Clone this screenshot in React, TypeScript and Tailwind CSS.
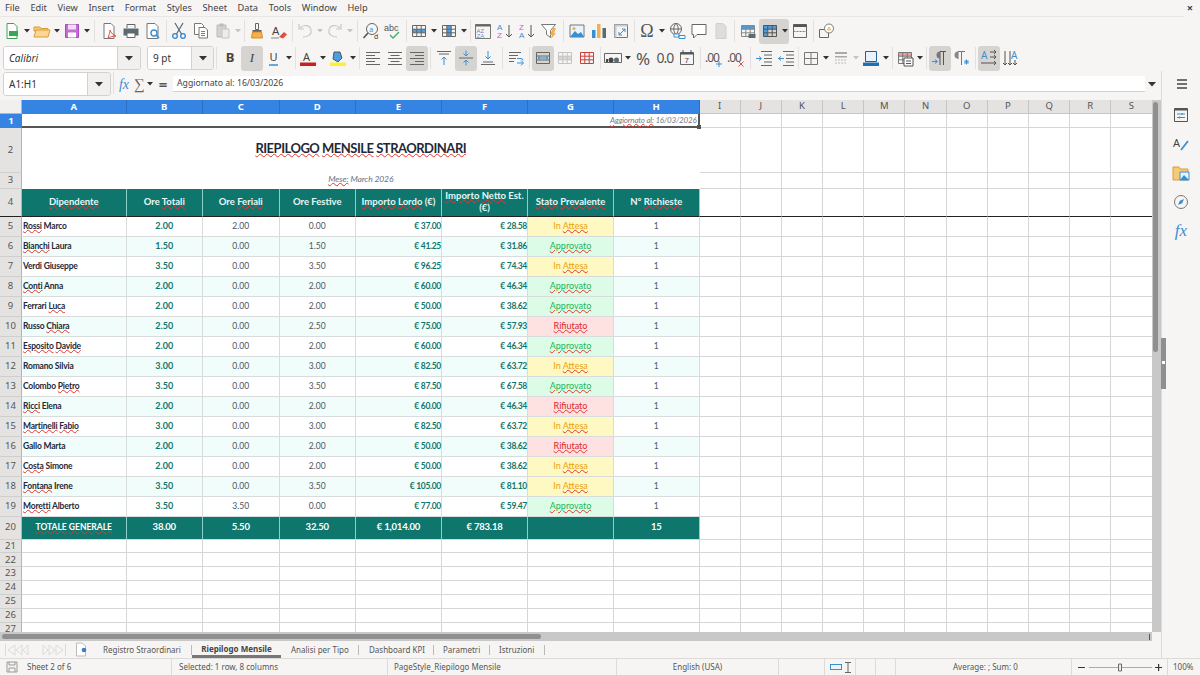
import React from "react";

const UI = "font-['Noto_Sans',sans-serif]";
const CELL = "font-['Lato',sans-serif]";

const menus = ["File", "Edit", "View", "Insert", "Format", "Styles", "Sheet", "Data", "Tools", "Window", "Help"];
const columns = ["A", "B", "C", "D", "E", "F", "G", "H"];
const idleColumns = ["I", "J", "K", "L", "M", "N", "O", "P", "Q", "R", "S"];

// a trailing * marks a word the spell checker flags
const rows = [
  ["Rossi* Marco", "2.00", "2.00", "0.00", "37.00", "28.58", "A"],
  ["Bianchi* Laura", "1.50", "0.00", "1.50", "41.25", "31.86", "O"],
  ["Verdi Giuseppe", "3.50", "0.00", "3.50", "96.25", "74.34", "A"],
  ["Conti* Anna", "2.00", "0.00", "2.00", "60.00", "46.34", "O"],
  ["Ferrari Luca*", "2.00", "0.00", "2.00", "50.00", "38.62", "O"],
  ["Russo Chiara*", "2.50", "0.00", "2.50", "75.00", "57.93", "R"],
  ["Esposito* Davide*", "2.00", "0.00", "2.00", "60.00", "46.34", "O"],
  ["Romano Silvia", "3.00", "0.00", "3.00", "82.50", "63.72", "A"],
  ["Colombo Pietro*", "3.50", "0.00", "3.50", "87.50", "67.58", "O"],
  ["Ricci* Elena", "2.00", "0.00", "2.00", "60.00", "46.34", "R"],
  ["Martinelli* Fabio*", "3.00", "0.00", "3.00", "82.50", "63.72", "A"],
  ["Gallo Marta", "2.00", "0.00", "2.00", "50.00", "38.62", "R"],
  ["Costa* Simone", "2.00", "0.00", "2.00", "50.00", "38.62", "A"],
  ["Fontana* Irene", "3.50", "0.00", "3.50", "105.00", "81.10", "A"],
  ["Moretti* Alberto", "3.50", "3.50", "0.00", "77.00", "59.47", "O"],
];

const headers = ["Dipendente*", "Ore Totali*", "Ore Feriali*", "Ore Festive", "Importo* Lordo* (€)", "Importo* Netto* Est. (€)", "Stato* Prevalente*", "N° Richieste*"];
const totals = ["38.00", "5.50", "32.50", "€ 1,014.00", "€ 783.18", "", "15"];

function Spell({ text, color = "decoration-[#e5342b]" }: { text: string; color?: string }) {
  return (
    <span>
      {text.split(" ").map((w, i) => (
        <React.Fragment key={i}>
          {i > 0 && " "}
          {w.endsWith("*") ? (
            <span className={`underline decoration-wavy decoration-1 underline-offset-0 ${color}`}>{w.slice(0, -1)}</span>
          ) : (
            w
          )}
        </React.Fragment>
      ))}
    </span>
  );
}

function Status({ kind }: { kind: string }) {
  if (kind === "A")
    return <div className="flex items-center justify-center border-r border-b border-[#d8dcdc] bg-[#fef9c3] text-[9px] text-[#eaa30c]"><Spell text="In Attesa*" /></div>;
  if (kind === "O")
    return <div className="flex items-center justify-center border-r border-b border-[#d8dcdc] bg-[#dcfce7] text-[9px] text-[#22b357]"><Spell text="Approvato*" /></div>;
  return <div className="flex items-center justify-center border-r border-b border-[#d8dcdc] bg-[#fee2e2] text-[9px] text-[#dc2626]"><Spell text="Rifiutato*" /></div>;
}

function Blank({ className = "border-b-[#d6d6d6]" }: { className?: string }) {
  return <div className={`border-r border-b border-r-[#d6d6d6] ${className}`} />;
}

function RowHead({ n, className = "border-b-[#cfcfcd]" }: { n: number; className?: string }) {
  return <div className={`flex items-center justify-center border-r border-b border-r-[#b5b5b3] bg-[#e4e3e1] text-[9.5px] text-[#555] ${UI} ${className}`}>{n}</div>;
}

function Ic({ children }: { children: React.ReactNode }) {
  return <svg width="18" height="18" viewBox="0 0 18 18" fill="none" strokeWidth="1">{children}</svg>;
}

function Tool({ active, children }: { active?: boolean; children: React.ReactNode }) {
  return <div className={`flex h-[25px] w-[22px] shrink-0 items-center justify-center rounded-[3px] ${active ? "bg-[#d6d4d1]" : ""}`}>{children}</div>;
}

function Arrow({ dim }: { dim?: boolean }) {
  return (
    <div className="flex w-[8px] shrink-0 justify-center">
      <svg width="6" height="4" viewBox="0 0 6 4"><path d="M0 0h6L3 3.5z" fill={dim ? "#c4c4c4" : "#333"} /></svg>
    </div>
  );
}

function Sep({ w = "w-[4px]" }: { w?: string }) {
  return (
    <div className={`flex shrink-0 justify-center ${w}`}>
      <div className="h-[22px] w-px bg-[#e2e1df]" />
    </div>
  );
}

function Lines({ d, color = "#666" }: { d: string; color?: string }) {
  return <path d={d} stroke={color} />;
}

function Grid3({ stroke = "#777", fill }: { stroke?: string; fill?: React.ReactNode }) {
  return (
    <>
      {fill}
      <path d="M2.5 3.5h13v11h-13zM2.5 7.2h13M2.5 10.8h13M6.8 3.5v11M11.2 3.5v11" stroke={stroke} />
    </>
  );
}

function Drop({ label, w, arrowW }: { label: string; w: string; arrowW: string }) {
  return (
    <div className="flex h-[24px] shrink-0 overflow-hidden rounded-[3px] border border-[#d3d2d0]">
      <div className={`flex items-center bg-white pl-[5px] text-[10px] text-[#333] ${w}`}>{label}</div>
      <div className={`flex items-center justify-center border-l border-[#d3d2d0] bg-[#f1f0ee] ${arrowW}`}>
        <svg width="8" height="5" viewBox="0 0 8 5"><path d="M0 0h8L4 4.5z" fill="#333" /></svg>
      </div>
    </div>
  );
}

function MainBar() {
  return (
    <div className="mr-[16px] flex h-[29px] items-center border-t border-[#e8e7e5] pl-[1px]">
      <Tool><Ic><path d="M4 1.5h7l3 3v12H4z" stroke="#3aa655" fill="#fff" /><path d="M6 9h9v5H6z" fill="#3aa655" /></Ic></Tool><Arrow />
      <Tool><Ic><path d="M1 5h6l1 1.5h7V9H1z" fill="#f6c977" stroke="#dd9c3a" /><path d="M1 15l2-7h14l-2 7z" fill="#fbd78f" stroke="#dd9c3a" /></Ic></Tool><Arrow />
      <Tool><Ic><path d="M2.5 2.5h13v13h-13z" fill="#c56fd6" stroke="#a44bb7" /><path d="M5 2.5h8v5H5z" fill="#f2def6" /><path d="M5 10.5h8v5H5z" fill="#fff" /></Ic></Tool><Arrow />
      <Sep w="w-[7px]" />
      <Tool><Ic><path d="M4 1.5h7l3 3v12H4z" stroke="#777" fill="#fff" /><path d="M8 16c1-3 2-6 2-8 1 3 3 5 6 6-3 0-6 1-8 2z" stroke="#e0503f" /></Ic></Tool>
      <Tool><Ic><path d="M5 6V2.5h8V6" stroke="#666" /><path d="M1.5 6.5h15v7h-15z" fill="#5d6a72" /><path d="M5 11h8v4.5H5z" fill="#fff" stroke="#666" /></Ic></Tool>
      <Tool><Ic><path d="M3 1.5h8l3 3v12H3z" stroke="#777" fill="#fff" /><circle cx="10" cy="11" r="3" stroke="#3a8fd1" strokeWidth="1.4" /><path d="M12 13l3 3" stroke="#3a8fd1" strokeWidth="1.6" /></Ic></Tool>
      <Sep />
      <Tool><Ic><path d="M5 1l6.5 11M13 1L6.5 12" stroke="#5b6670" strokeWidth="1.2" /><circle cx="5" cy="14" r="2.3" stroke="#2f86cc" strokeWidth="1.3" /><circle cx="13" cy="14" r="2.3" stroke="#2f86cc" strokeWidth="1.3" /></Ic></Tool>
      <Tool><Ic><path d="M2.5 1.5h7l2 2v9h-9z" stroke="#777" fill="#fff" /><path d="M7 5.5h6l2.5 2.5v8H7z" stroke="#777" fill="#fff" /><path d="M9 9.5h4M9 11.5h4M9 13.5h4" stroke="#3a8fd1" /></Ic></Tool>
      <Tool><Ic><path d="M3 3h9v12H3z" fill="#d2d2d2" stroke="#bbb" /><path d="M5.5 1.5h4v3h-4z" fill="#bbb" /><path d="M8 7h7v9H8z" fill="#ececec" stroke="#c4c4c4" /></Ic></Tool><Arrow dim />
      <Sep />
      <Tool><Ic><path d="M7.5 1.5h3v6h-3z" stroke="#666" /><path d="M4.5 8h9v2h-9z" fill="#58626a" /><path d="M4.5 10h9l1 6h-11z" fill="#f3b04d" stroke="#d98d25" /></Ic></Tool>
      <Tool><Ic><text x="2" y="12.5" fontSize="11" fill="#444" fontFamily="Liberation Sans">A</text><path d="M9 15l5-5 3 2.5-4 4z" fill="#e0503f" /><path d="M1 16h8" stroke="#888" /></Ic></Tool>
      <Sep />
      <Tool><Ic><path d="M4 6c4-4 10-3 11 2s-4 7-8 7" stroke="#c8c8c8" strokeWidth="1.2" /><path d="M3 2v5h5" stroke="#c8c8c8" strokeWidth="1.2" /></Ic></Tool><Arrow dim />
      <Tool><Ic><path d="M14 6C10 2 4 3 3 8s4 7 8 7" stroke="#c8c8c8" strokeWidth="1.2" /><path d="M15 2v5h-5" stroke="#c8c8c8" strokeWidth="1.2" /></Ic></Tool><Arrow dim />
      <Sep w="w-[6px]" />
      <Tool><Ic><circle cx="10" cy="7" r="5.5" stroke="#666" /><text x="7.3" y="9.5" fontSize="7" fill="#3a8fd1">a</text><path d="M6 11l-4.500 5" stroke="#555" strokeWidth="1.6" /><text x="12" y="17" fontSize="7" fill="#444">d</text></Ic></Tool>
      <Tool><Ic><text x="0" y="9" fontSize="9" fill="#555" fontFamily="Liberation Sans">abc</text><path d="M6 13l3 3 6-6" stroke="#3fa86a" strokeWidth="1.3" /></Ic></Tool>
      <Sep />
      <Tool><Ic><Grid3 stroke="#666" fill={<path d="M2.5 7.200h13v3.600h-13z" fill="#4a9de0" />} /></Ic></Tool><Arrow />
      <Tool><Ic><Grid3 stroke="#666" fill={<path d="M6.800 3.500h4.400v11H6.800z" fill="#4a9de0" />} /></Ic></Tool><Arrow />
      <Sep />
      <Tool><Ic><path d="M1.500 2.500h15v14h-15z" stroke="#777" /><path d="M1.500 2.500h15v2h-15z" fill="#666" /><text x="2.500" y="10.500" fontSize="6" fill="#b45ac8" fontFamily="Liberation Sans">AZ</text><text x="2.500" y="15.800" fontSize="6" fill="#4a9de0" fontFamily="Liberation Sans">ZA</text></Ic></Tool>
      <Tool><Ic><text x="1" y="8" fontSize="8" fill="#3a8fd1" fontFamily="Liberation Sans">A</text><text x="1" y="16" fontSize="8" fill="#c35fd0" fontFamily="Liberation Sans">Z</text><path d="M13 3v12M10 12l3 3 3-3" stroke="#555" /></Ic></Tool>
      <Tool><Ic><text x="1" y="8" fontSize="8" fill="#c35fd0" fontFamily="Liberation Sans">Z</text><text x="1" y="16" fontSize="8" fill="#3a8fd1" fontFamily="Liberation Sans">A</text><path d="M13 3v12M10 12l3 3 3-3" stroke="#555" /></Ic></Tool>
      <Tool><Ic><path d="M1.500 2.500h14l-5 6v7l-4-3V8.500z" stroke="#777" fill="#fff" /><path d="M13 6l-3 7 2 0-1 4 5-6h-2l2-5z" fill="#f3b04d" /></Ic></Tool>
      <Sep w="w-[6px]" />
      <Tool><Ic><path d="M2 3h14v12H2z" fill="#e8f3fb" stroke="#777" /><path d="M2 15l5-6 3 3 3-2 3 5z" fill="#3a8fd1" /><circle cx="6" cy="6.500" r="1.500" fill="#f3b04d" /></Ic></Tool>
      <Tool><Ic><path d="M2 8h3.500v8H2z" fill="#3a8fd1" /><path d="M7 2h3.500v14H7z" fill="#f3b04d" /><path d="M12.500 6H16v10h-3.500z" fill="#5d6a72" /></Ic></Tool>
      <Tool><Ic><path d="M2.500 2.500h13v13h-13z" stroke="#777" /><path d="M2.500 2.500h13v2h-13zM2.500 2.500h2v13h-2z" fill="#ccc" /><path d="M7 13l6-6M10 7h3v3M7 10v3h3" stroke="#3a8fd1" /></Ic></Tool>
      <Sep />
      <Tool><span className="font-['Liberation_Serif',serif] text-[18px] leading-none text-[#555]">Ω</span></Tool><Arrow />
      <Tool><Ic><circle cx="8" cy="7" r="5.500" stroke="#666" /><path d="M2.500 7h11M8 1.500c-3 3-3 8 0 11M8 1.500c3 3 3 8 0 11" stroke="#666" /><path d="M6 12h5v3H6zM11 13.500h6v3h-6z" stroke="#3a8fd1" fill="#fff" /></Ic></Tool>
      <Tool><Ic><path d="M2 2.500h14v10H7l-3.500 3.500v-3.500H2z" stroke="#666" fill="#fff" /></Ic></Tool>
      <Tool><Ic><path d="M4 1.500h7l3 3v12H4z" fill="#ddd" stroke="#d0d0d0" /></Ic></Tool>
      <Sep w="w-[5px]" />
      <Tool><Ic><Grid3 stroke="#888" fill={<path d="M2.500 3.500h13v3.700h-13z" fill="#4a9de0" />} /><path d="M9.500 12h7v4h-7z" fill="#5d6a72" /></Ic></Tool>
      <div className="flex h-[25px] items-center rounded-[3px] bg-[#d6d4d1]">
        <Tool><Ic><Grid3 stroke="#555" fill={<path d="M2.500 3.500h13v3.700h-13zM2.500 3.500h4.300v11H2.500z" fill="#4a9de0" />} /></Ic></Tool><Arrow />
      </div>
      <Tool><Ic><path d="M2.500 2.500h13v13h-13z" stroke="#666" /><path d="M2.500 2.500h13v2.500h-13z" fill="#555" /><path d="M2.500 9.500h13" stroke="#3a8fd1" strokeDasharray="2 1" /></Ic></Tool>
      <Sep w="w-[5px]" />
      <Tool><Ic><path d="M1.500 7.500h9v8h-9z" stroke="#666" /><circle cx="11" cy="6.500" r="4.500" stroke="#777" fill="#fff" /><path d="M9.500 8l1.500-3 1.500 3z" stroke="#f3b04d" /></Ic></Tool>
    </div>
  );
}

function FormatBar() {
  return (
    <div className="flex h-[26px] items-center pl-[3px]">
      <div className="italic"><Drop label="Calibri" w="w-[113px]" arrowW="w-[23px]" /></div>
      <div className="ml-[6px]"><Drop label="9 pt" w="w-[43px]" arrowW="w-[22px]" /></div>
      <Sep w="w-[5px]" />
      <Tool><span className="text-[13px] font-bold text-[#444]">B</span></Tool>
      <Tool active><span className="font-['Liberation_Serif',serif] text-[13px] italic text-[#444]">I</span></Tool>
      <Tool><Ic><text x="4.500" y="12" fontSize="11" fill="#444" fontFamily="Noto Sans">U</text><path d="M4 16h9" stroke="#3a8fd1" strokeWidth="1.500" /></Ic></Tool><Arrow />
      <Sep />
      <Tool><Ic><text x="4" y="12" fontSize="11" fill="#444" fontFamily="Noto Sans">A</text><path d="M1 13.500h16v3.500H1z" fill="#c9211e" /></Ic></Tool><Arrow />
      <Tool><Ic><path d="M5 3h6l2 6-4 4-5-3z" fill="#4a9de0" stroke="#555" /><path d="M1 13.500h16v3.500H1z" fill="#ffee33" /></Ic></Tool><Arrow />
      <Sep w="w-[5px]" />
      <Tool><Ic><Lines d="M2 3.500h14M2 6.500h9M2 9.500h14M2 12.500h9M2 15.500h14" /></Ic></Tool>
      <Tool><Ic><Lines d="M2 3.500h14M4.500 6.500h9M2 9.500h14M4.500 12.500h9M2 15.500h14" /></Ic></Tool>
      <Tool active><Ic><Lines d="M2 3.500h14M7 6.500h9M2 9.500h14M7 12.500h9M2 15.500h14" /></Ic></Tool>
      <Sep w="w-[5px]" />
      <Tool><Ic><Lines d="M2 2.500h14M4 5h10" /><path d="M9 16V8M6.500 10.500L9 8l2.500 2.500" stroke="#3a8fd1" /></Ic></Tool>
      <Tool active><Ic><Lines d="M2 9h14" /><path d="M9 1.500V7M6.500 4.500L9 7l2.500-2.500M9 16.500V11M6.500 13.500L9 11l2.500 2.500" stroke="#3a8fd1" /></Ic></Tool>
      <Tool><Ic><Lines d="M4 13h10M2 15.500h14" /><path d="M9 2v8M6.500 7.500L9 10l2.500-2.500" stroke="#3a8fd1" /></Ic></Tool>
      <Sep w="w-[6px]" />
      <Tool><Ic><Lines d="M2 3.500h12M2 6.500h9M2 9.500h7M2 12.500h5" /><path d="M10 14h6M14 11.500l2.500 2.500-2.500 2.500M10 9.500h4a2 2 0 0 1 2 2" stroke="#3a8fd1" /></Ic></Tool>
      <Sep w="w-[5px]" />
      <Tool active><Ic><path d="M2.500 3.500h13v11h-13zM2.500 7h13M2.500 11h13" stroke="#666" /><path d="M4 9h10M4 9l2-1.500M4 9l2 1.500M14 9l-2-1.500M14 9l-2 1.500" stroke="#3a8fd1" /></Ic></Tool>
      <Tool><Ic><Grid3 stroke="#c4c4c4" fill={<path d="M2.500 7.200h13v3.600h-13z" fill="#d6d6d6" />} /></Ic></Tool>
      <Tool><Ic><Grid3 stroke="#c9413a" /></Ic></Tool>
      <Sep />
      <Tool><Ic><path d="M0.500 4.500h17v9h-17z" stroke="#666" /><circle cx="7" cy="11" r="2.500" fill="#444" /><circle cx="12.500" cy="11" r="2.500" fill="#5d6a72" /><path d="M2 10h2v3H2z" fill="#444" /></Ic></Tool><Arrow />
      <Tool><span className="text-[17px] leading-none text-[#555]">%</span></Tool>
      <Tool><span className="text-[14px] leading-none tracking-[-1px] text-[#555]">0.0</span></Tool>
      <Tool><Ic><path d="M2.500 3.500h13v12h-13z" stroke="#666" /><path d="M2.500 3.500h13v2h-13z" fill="#555" /><path d="M5 1v3M13 1v3" stroke="#555" /><text x="6.500" y="13.500" fontSize="8" fill="#444" fontFamily="Liberation Sans">7</text></Ic></Tool>
      <Sep w="w-[5px]" />
      <Tool><Ic><text x="0" y="13" fontSize="12" letterSpacing="-1" fill="#555" fontFamily="Noto Sans">.00</text><path d="M11 15h6M14 12v6" stroke="#3a8fd1" /></Ic></Tool>
      <Tool><Ic><text x="0" y="13" fontSize="12" letterSpacing="-1" fill="#555" fontFamily="Noto Sans">.00</text><path d="M11.500 12.500l5 5M16.500 12.500l-5 5" stroke="#e0503f" /></Ic></Tool>
      <Sep w="w-[6px]" />
      <Tool><Ic><Lines d="M6 2.500h11M9 6h8M9 9.500h8M9 13h8M6 16.500h11" /><path d="M1 9.500h5M4 7.500l2.500 2-2.500 2" stroke="#3a8fd1" /></Ic></Tool>
      <Tool><Ic><Lines d="M6 2.500h11M9 6h8M9 9.500h8M9 13h8M6 16.500h11" /><path d="M7 9.500H1.500M4 7.500l-2.500 2 2.500 2" stroke="#3a8fd1" /></Ic></Tool>
      <Sep w="w-[3px]" />
      <Tool><Ic><path d="M2.500 3.500h13v12h-13zM9 3.500v12M2.500 9.500h13" stroke="#777" /></Ic></Tool><Arrow />
      <Tool><Ic><path d="M3 3h12v2H3zM3 7h12v1.500H3z" fill="#aaa" /><path d="M3 11h12M3 14h12" stroke="#bbb" strokeDasharray="2 1" /></Ic></Tool><Arrow dim />
      <Tool><Ic><path d="M3.500 2.500h11v10h-11z" stroke="#1f5f99" fill="#eaf3fa" /><path d="M1 13.500h16v3.500H1z" fill="#1f6fb2" /></Ic></Tool><Arrow />
      <Sep />
      <Tool><Ic><Grid3 stroke="#777" fill={<path d="M2.500 3.500h13v3.700h-13z" fill="#e9a29d" />} /><path d="M8 9h9v8H8z" fill="#fff" stroke="#555" /><path d="M10 12h5M10 14.500h5" stroke="#555" /></Ic></Tool><Arrow />
      <Sep w="w-[5px]" />
      <Tool active><Ic><path d="M9 16V2.500h6M12.500 2.500V16" stroke="#555" /><path d="M9 2.500a3.500 3.500 0 0 0 0 7" fill="#777" /><path d="M1 12.500h5M4 10.500l2.500 2-2.500 2" stroke="#3a8fd1" /></Ic></Tool>
      <Tool><Ic><path d="M5 10V2.500h7M8.500 2.500V16" stroke="#777" /><path d="M5 2.500a3.500 3.500 0 0 0 0 7" fill="#888" /><path d="M11 13l5 0M13.500 10.500v5M11.800 11.200l3.400 3.600M15.200 11.200l-3.400 3.600" stroke="#3a8fd1" /></Ic></Tool>
      <Sep w="w-[5px]" />
      <Tool active><Ic><text x="1" y="10" fontSize="10" fill="#3a8fd1" fontFamily="Noto Sans">A</text><path d="M10 3h6M14 1l2 2-2 2M10 8h6M14 6l2 2-2 2M1 14h15M14 12l2 2-2 2" stroke="#555" /></Ic></Tool>
      <Tool><Ic><text x="9" y="10" fontSize="10" fill="#3a8fd1" fontFamily="Noto Sans">A</text><path d="M3 2v14M1 14l2 2 2-2M8 2v14M6 14l2 2 2-2M13 11v5M11 14l2 2 2-2" stroke="#555" /></Ic></Tool>
    </div>
  );
}

function FormulaBar() {
  return (
    <div className="flex h-[29px] items-start pl-[3px] pt-[1px]">
      <Drop label="A1:H1" w="w-[83px]" arrowW="w-[23px]" />
      <Sep w="w-[5px]" />
      <div className="flex h-[24px] w-[16px] items-center justify-center font-['Liberation_Serif',serif] text-[14px] italic text-[#3a8fd1]">fx</div>
      <div className="flex h-[24px] w-[14px] items-center justify-center font-['Liberation_Serif',serif] text-[15px] text-[#666]">∑</div>
      <div className="flex h-[24px] items-center"><Arrow /></div>
      <div className="flex h-[24px] w-[18px] items-center justify-center text-[15px] font-bold text-[#555]">=</div>
      <div className="ml-[1px] mt-[4px] flex h-[16px] w-[972px] items-center border-b border-[#d3d2d0] bg-white pl-[4px] text-[8.7px] text-[#444]">Aggiornato al: 16/03/2026</div>
      <div className="flex h-[24px] w-[14px] items-center justify-center"><svg width="8" height="5" viewBox="0 0 8 5"><path d="M0 0h8L4 4.500z" fill="#333" /></svg></div>
    </div>
  );
}

function Sheet() {
  return (
    <div className={`grid h-[532px] w-[1152px] shrink-0 grid-cols-[22px_104.5px_76.5px_76.5px_76.5px_86px_86px_86px_85.5px_repeat(11,41.2px)] grid-rows-[14px_14px_45px_15.5px_28px_repeat(15,20px)_23px_repeat(7,13.85px)] overflow-hidden bg-white ${CELL}`}>
      <div className="border-r border-b border-[#b5b5b3] bg-[#f1f0ee]" />
      {columns.map((c) => (
        <div key={c} className={`flex items-center justify-center border-r border-[#2a6fc4] bg-[#3584e4] text-[9.5px] font-bold text-white ${UI}`}>{c}</div>
      ))}
      {idleColumns.map((c) => (
        <div key={c} className={`flex items-center justify-center border-r border-b border-[#c6c6c4] bg-[#e4e3e1] text-[9.5px] text-[#555] ${UI}`}>{c}</div>
      ))}

      <div className={`flex items-center justify-center bg-[#3584e4] text-[9.5px] font-bold text-white ${UI}`}>1</div>
      <div className="relative col-span-8 flex items-center justify-end border-r-2 border-b-2 border-[#555] pr-[1px] text-[8px] tracking-[-0.2px] italic text-[#777e88]">
        <Spell text="Aggiornato* al:* 16/03/2026" />
        <div className="absolute -right-[3px] -bottom-[3px] h-[4px] w-[4px] bg-[#555]" />
      </div>
      {idleColumns.map((c) => <Blank key={c} />)}

      <RowHead n={2} />
      <div className="col-span-8 flex items-center justify-center pb-[3px] text-[13px] font-bold tracking-[-0.5px] text-[#1f2937]">
        <Spell text="RIEPILOGO* MENSILE* STRAORDINARI*" />
      </div>
      {idleColumns.map((c) => <Blank key={c} />)}

      <RowHead n={3} />
      <div className="col-span-8 flex items-center justify-center pb-[2px] text-[8.5px] tracking-[-0.1px] italic text-[#6b7280]">
        <Spell text="Mese:* March 2026" />
      </div>
      {idleColumns.map((c) => <Blank key={c} />)}

      <RowHead n={4} className="border-b-[#222]" />
      {headers.map((h) => (
        <div key={h} className="flex items-center justify-center border-r border-b border-r-[#8ccfc8] border-b-[#222] bg-[#0f766e] px-[2px] text-center text-[9.5px] leading-[12px] font-bold text-[#e8f7f5]">
          <Spell text={h} />
        </div>
      ))}
      {idleColumns.map((c) => <Blank key={c} className="border-b-[#222]" />)}

      {rows.map((r, i) => {
        const bg = i % 2 === 1 ? "bg-[#f0fdfa]" : "bg-white";
        const base = `flex items-center border-r border-b border-[#d8dcdc] ${bg}`;
        return (
          <React.Fragment key={i}>
            <RowHead n={i + 5} />
            <div className={`${base} pl-[1px] text-[8.5px] tracking-[-0.2px] font-bold text-[#1f2937]`}><Spell text={r[0]} /></div>
            <div className={`${base} justify-center text-[9px] font-bold text-[#0f766e]`}>{r[1]}</div>
            <div className={`${base} justify-center text-[8.5px] text-[#4b5563]`}>{r[2]}</div>
            <div className={`${base} justify-center text-[8.5px] text-[#4b5563]`}>{r[3]}</div>
            <div className={`${base} justify-end text-[8.5px] tracking-[-0.3px] font-bold text-[#0f766e]`}>€ {r[4]}</div>
            <div className={`${base} justify-end text-[8.5px] tracking-[-0.3px] font-bold text-[#0f766e]`}>€ {r[5]}</div>
            <Status kind={r[6]} />
            <div className={`${base} justify-center text-[8.5px] text-[#4b5563]`}>1</div>
            {idleColumns.map((c) => <Blank key={c} />)}
          </React.Fragment>
        );
      })}

      <RowHead n={20} />
      <div className="flex items-center justify-center border-r border-b border-r-[#8ccfc8] border-b-[#d6d6d6] bg-[#0f766e] text-[8.5px] font-bold text-white">
        <Spell text="TOTALE* GENERALE*" />
      </div>
      {totals.map((t, i) => (
        <div key={i} className="flex items-center justify-center border-r border-b border-r-[#8ccfc8] border-b-[#d6d6d6] bg-[#0f766e] pb-[1px] text-[9.5px] tracking-[-0.2px] font-bold text-white">{t}</div>
      ))}
      {idleColumns.map((c) => <Blank key={c} />)}

      {[21, 22, 23, 24, 25, 26, 27].map((n) => (
        <React.Fragment key={n}>
          <RowHead n={n} />
          {columns.map((c) => <Blank key={c} />)}
          {idleColumns.map((c) => <Blank key={c} />)}
        </React.Fragment>
      ))}
    </div>
  );
}

function SheetTabs() {
  const tab = "flex h-[17px] items-center whitespace-nowrap text-[8px] text-[#555]";
  return (
    <div className="flex h-[17px] items-center text-[#555]">
      <div className="ml-[5px] flex w-[61px] justify-center">
        <svg width="61" height="14" viewBox="0 0 61 14" fill="none" stroke="#dcdbd9"><path d="M.5 1v12M10 2L3 7l7 5zM17 2l-6 5 6 5zM23 2l-5 5 5 5zM38 2l5 5-5 5zM44 2l6 5-6 5zM51 2l7 5-7 5zM60.500 1v12" /></svg>
      </div>
      <div className="ml-[9px] flex w-[12px] justify-center">
        <svg width="12" height="15" viewBox="0 0 12 15"><path d="M1.500 1h6l3 3v10h-9z" stroke="#bbb" fill="#fff" /><circle cx="9" cy="8" r="2.300" fill="#3a7fc4" /></svg>
      </div>
      <div className={`ml-[16px] w-[88px] ${tab}`}>Registro Straordinari</div>
      <div className="h-[10px] w-px bg-[#bbb]" />
      <div className="flex h-[17px] w-[89px] items-center justify-center whitespace-nowrap border-b-[3px] border-[#777] pt-[2px] text-[8px] font-bold text-[#444]">Riepilogo Mensile</div>
      <div className={`ml-[10px] w-[67px] ${tab}`}>Analisi per Tipo</div>
      <div className="h-[10px] w-px bg-[#bbb]" />
      <div className={`ml-[10px] w-[64px] ${tab}`}>Dashboard KPI</div>
      <div className="h-[10px] w-px bg-[#bbb]" />
      <div className={`ml-[9px] w-[46px] ${tab}`}>Parametri</div>
      <div className="h-[10px] w-px bg-[#bbb]" />
      <div className={`ml-[9px] w-[45px] ${tab}`}>Istruzioni</div>
      <div className="h-[10px] w-px bg-[#bbb]" />
    </div>
  );
}

function Sidebar() {
  return (
    <div className="relative flex w-[39px] shrink-0 flex-col items-center border-l border-[#dcdbd9] pt-[4px]">
      <div className="absolute top-[267px] -left-px h-[51px] w-[5px] bg-[#8f8f8f]">
        <div className="absolute top-[23px] left-[1px] h-[3px] w-[3px] bg-white" />
      </div>
      <div className="ml-[1px] flex h-[18px] items-center">
        <svg width="12" height="10" viewBox="0 0 12 10"><path d="M1 1h10M1 5h10M1 9h10" stroke="#444" strokeWidth="1.300" /></svg>
      </div>
      <div className="mt-[13px] flex flex-col items-center gap-[11px]">
        <Ic><path d="M2.500 2.500h13v13h-13z" stroke="#555" /><path d="M2.500 2.500h13v2h-13z" fill="#555" /><path d="M5 8h8M5 11.500h8" stroke="#3a8fd1" /><path d="M10 7v2M7.500 10.500v2" stroke="#3a8fd1" /></Ic>
        <Ic><text x="1" y="12" fontSize="11" fill="#444" fontFamily="Noto Sans">A</text><path d="M9 15l7-9" stroke="#3a8fd1" strokeWidth="1.800" /></Ic>
        <Ic><path d="M1 3h6l1 2h8v11H1z" fill="#f6c977" stroke="#dd9c3a" /><path d="M8 8h9v8H8z" fill="#e8f3fb" stroke="#3a8fd1" /><path d="M8 16l4-5 5 5z" fill="#3a8fd1" /></Ic>
        <Ic><circle cx="9" cy="9" r="6.500" stroke="#777" /><path d="M6 12l1.800-4.200L12 6l-1.800 4.200z" fill="#3a8fd1" /></Ic>
        <div className="font-['Liberation_Serif',serif] text-[17px] leading-none italic text-[#3a8fd1]">fx</div>
      </div>
    </div>
  );
}

function StatusBar() {
  const sec = "flex h-full shrink-0 items-center border-l border-[#dcdbd9]";
  return (
    <div className={`flex h-[17px] items-center border-t border-[#dcdbd9] text-[8px] text-[#555] ${UI}`}>
      <div className="flex h-full w-[171px] shrink-0 items-center pl-[6px]">
        <svg width="12" height="12" viewBox="0 0 12 12"><path d="M1 1h10v10H1zM3 1v3h6V1M3 11V7h6v4" stroke="#999" fill="none" /></svg>
        <span className="ml-[9px]">Sheet 2 of 6</span>
      </div>
      <div className={`${sec} w-[216px] pl-[7px]`}>Selected: 1 row, 8 columns</div>
      <div className={`${sec} w-[229px] pl-[6px]`}>PageStyle_Riepilogo Mensile</div>
      <div className={`${sec} w-[162px] justify-center`}>English (USA)</div>
      <div className={`${sec} w-[46px]`} />
      <div className={`${sec} w-[31px] justify-center gap-[3px]`}>
        <div className="h-[6px] w-[12px] border border-[#3a8fd1] bg-[#e8f3fb]" />
        <svg width="6" height="11" viewBox="0 0 6 11"><path d="M0 .500h6M0 10.500h6M3 .500v10" stroke="#666" /></svg>
      </div>
      <div className={`${sec} w-[20px]`} />
      <div className={`${sec} w-[20px]`} />
      <div className={`${sec} w-[176px] pl-[57px]`}>Average: ; Sum: 0</div>
      <div className={`${sec} w-[96px] pl-[6px]`}>
        <svg width="90" height="11" viewBox="0 0 90 11"><path d="M0 5.500h7M78 5.500h7M81.500 2v7" stroke="#333" strokeWidth="1.200" /><path d="M11 5.500h64" stroke="#aaa" /><path d="M41 2h3v7h-3z" fill="#eee" stroke="#666" /></svg>
      </div>
      <div className="flex h-full flex-1 items-center border-l border-[#dcdbd9] pl-[5px]">100%</div>
    </div>
  );
}

export default function App() {
  return (
    <div className={`flex h-[675px] w-[1200px] flex-col overflow-hidden bg-[#f6f5f4] ${UI}`}>
      <div className="flex h-[16px] items-center gap-[10.6px] pl-[5px] text-[9.25px] text-[#444]">
        {menus.map((m) => <span key={m}>{m}</span>)}
        <span className="ml-auto mr-[7px] text-[11px] font-bold">×</span>
      </div>
      <MainBar />
      <FormatBar />
      <div className="flex h-[587px]">
        <div className="flex w-[1161px] shrink-0 flex-col">
          <FormulaBar />
          <div className="flex h-[532px]">
            <Sheet />
            <div className="h-full w-[9px] shrink-0 bg-[#c8c8c8] pt-[2px]">
              <div className="h-[250px] w-[5px] translate-x-[1px] rounded-[3px] bg-[#8f8f8f]" />
            </div>
          </div>
          <div className="flex h-[9px]">
            <div className="flex w-[1152px] items-center bg-[#c8c8c8] pl-[2px]">
              <div className="h-[5px] w-[539px] rounded-[3px] bg-[#8f8f8f]" />
              <div className="ml-auto mr-[2px] h-[6px] w-px bg-[#555]" />
            </div>
          </div>
          <SheetTabs />
        </div>
        <Sidebar />
      </div>
      <StatusBar />
    </div>
  );
}
